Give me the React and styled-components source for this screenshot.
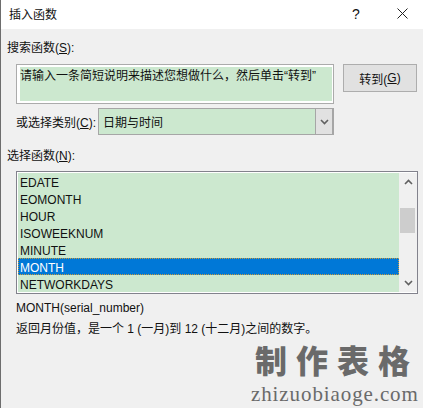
import React from "react"
import styled, { createGlobalStyle } from "styled-components"

const GlobalStyle = createGlobalStyle`
	html, body {
		margin: 0;
		padding: 0;
		background: #f0f0f0;
	}
	body {
		font-family: "Liberation Sans", "Noto Sans CJK SC", sans-serif;
		font-size: 12px;
		color: #111;
	}
`

const rows = ["EDATE", "EOMONTH", "HOUR", "ISOWEEKNUM", "MINUTE", "MONTH", "NETWORKDAYS"]

const Dialog = styled.div`
	position: relative;
	width: 423px;
	height: 408px;
	box-sizing: border-box;
	border-left: 1px solid #6d6d6d;
	background: #f0f0f0;
	overflow: hidden;
`
const TitleBar = styled.div`
	height: 29px;
	background: #fff;
	display: flex;
	align-items: center;
	padding: 0 0 2px 8px;
	box-sizing: border-box;
	font-size: 12px;
`
const TitleText = styled.span`
	flex: 1;
`
const HelpMark = styled.span`
	width: 18px;
	margin-right: 32px;
	text-align: center;
	font-size: 14px;
`
const CloseButton = styled.svg`
	width: 11px;
	height: 11px;
	margin-right: 15px;
`
const Body = styled.div`
	padding: 9px 5px 0 6px;
`
const Label = styled.div`
	height: 17px;
	line-height: 20px;
	white-space: nowrap;
`
const Key = styled.span`
	text-decoration: underline;
	text-underline-offset: 1px;
`
const SearchRow = styled.div`
	display: flex;
	align-items: flex-start;
	margin: 9px 0 0 9px;
	gap: 9px;
`
const SearchBox = styled.div`
	box-sizing: border-box;
	width: 318px;
	height: 40px;
	border: 1px solid #ababab;
	background: #fff;
	padding: 2px 1px 2px 3px;
`
const SearchInner = styled.div`
	height: 34px;
	background: #cce8cf;
	line-height: 19px;
	white-space: nowrap;
`
const GoButton = styled.div`
	box-sizing: border-box;
	width: 74px;
	height: 28px;
	border: 1px solid #adadad;
	background: #e1e1e1;
	display: flex;
	align-items: center;
	justify-content: center;
`
const CategoryRow = styled.div`
	display: flex;
	align-items: center;
	margin: 4px 0 0 9px;
	gap: 3px;
`
const CategoryLabel = styled(Label)`
	width: 79px;
`
const Select = styled.div`
	box-sizing: border-box;
	width: 236px;
	height: 27px;
	border: 1px solid #a6a6a6;
	display: flex;
	background: #cce8cf;
`
const SelectValue = styled.div`
	flex: 1;
	padding-left: 4px;
	line-height: 28px;
`
const SelectArrow = styled.div`
	box-sizing: border-box;
	width: 18px;
	border: 1px solid #a6a6a6;
	border-width: 0 1px 0 1px;
	background: #e1e1e1;
	display: flex;
	align-items: center;
	justify-content: center;
`
const ListLabel = styled(Label)`
	margin-top: 11px;
`
const ListBox = styled.div`
	box-sizing: border-box;
	width: 402px;
	height: 123px;
	margin: 8px 0 0 9px;
	border: 1px solid #82828c;
	background: #fff;
	display: flex;
	padding: 1px 0 1px 1px;
`
const Rows = styled.div`
	width: 381px;
	background: #cce8cf;
`
const Row = styled.div`
	height: 17px;
	line-height: 20px;
	padding-left: 2px;
	box-sizing: border-box;
	font-size: 12px;
	background: ${({ $selected }) => ($selected ? "#0078d7" : "transparent")};
	color: ${({ $selected }) => ($selected ? "#fff" : "#111")};
	outline: ${({ $selected }) => ($selected ? "1px dotted #c99a3c" : "none")};
	outline-offset: -1px;
`
const ScrollBar = styled.div`
	flex: 1;
	background: #f0f0f0;
	display: flex;
	flex-direction: column;
	align-items: center;
	justify-content: space-between;
	padding: 6px 0;
	position: relative;
`
const ScrollThumb = styled.div`
	position: absolute;
	top: 35px;
	left: 1px;
	width: 15px;
	height: 25px;
	background: #cdcdcd;
`
const Signature = styled.div`
	margin: 6px 0 0 9px;
	height: 17px;
	line-height: 17px;
	font-size: 12px;
`
const Description = styled.div`
	margin: 4px 0 0 9px;
	height: 17px;
	line-height: 17px;
	white-space: nowrap;
`
const Watermark = styled.div`
	position: absolute;
	left: 250px;
	top: 340px;
	color: #6a6a6a;
`
const WatermarkTitle = styled.div`
	font-family: "Noto Sans CJK SC", sans-serif;
	font-weight: 900;
	font-size: 32px;
	line-height: 38px;
	letter-spacing: 9px;
	padding-left: 4px;
	white-space: nowrap;
`
const WatermarkUrl = styled.div`
	margin-top: 5px;
	font-family: "Liberation Serif", serif;
	font-size: 21px;
	letter-spacing: 0.9px;
	line-height: 22px;
	white-space: nowrap;
`

const Chevron = ({ up }) => (
	<svg width="9" height="6" viewBox="0 0 9 6">
		<path d={up ? "M1 5L4.5 1.5L8 5" : "M1 1L4.5 4.5L8 1"} fill="none" stroke="#606060" strokeWidth="1.6" />
	</svg>
)

export default function App() {
	return (
		<>
			<GlobalStyle />
			<Dialog>
				<TitleBar>
					<TitleText>插入函数</TitleText>
					<HelpMark>?</HelpMark>
					<CloseButton viewBox="0 0 11 11">
						<path d="M0.5 0.5L10.5 10.5M10.5 0.5L0.5 10.5" stroke="#222" strokeWidth="1" fill="none" />
					</CloseButton>
				</TitleBar>
				<Body>
					<Label>搜索函数(<Key>S</Key>):</Label>
					<SearchRow>
						<SearchBox>
							<SearchInner>请输入一条简短说明来描述您想做什么，然后单击“转到”</SearchInner>
						</SearchBox>
						<GoButton>转到(<Key>G</Key>)</GoButton>
					</SearchRow>
					<CategoryRow>
						<CategoryLabel>或选择类别(<Key>C</Key>):</CategoryLabel>
						<Select>
							<SelectValue>日期与时间</SelectValue>
							<SelectArrow><Chevron /></SelectArrow>
						</Select>
					</CategoryRow>
					<ListLabel>选择函数(<Key>N</Key>):</ListLabel>
					<ListBox>
						<Rows>
							{rows.map((name) => (
								<Row key={name} $selected={name === "MONTH"}>{name}</Row>
							))}
						</Rows>
						<ScrollBar>
							<Chevron up />
							<ScrollThumb />
							<Chevron />
						</ScrollBar>
					</ListBox>
					<Signature>MONTH(serial_number)</Signature>
					<Description>返回月份值，是一个 1 (一月)到 12 (十二月)之间的数字。</Description>
				</Body>
				<Watermark>
					<WatermarkTitle>制作表格</WatermarkTitle>
					<WatermarkUrl>zhizuobiaoge.com</WatermarkUrl>
				</Watermark>
			</Dialog>
		</>
	)
}
